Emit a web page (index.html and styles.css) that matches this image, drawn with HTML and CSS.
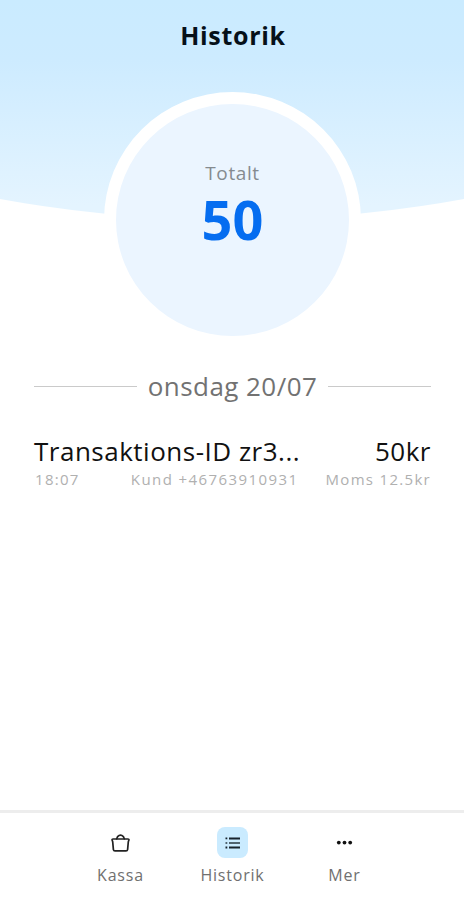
FILE: index.html
```html
<!DOCTYPE html>
<html lang="sv">
<head>
  <meta charset="UTF-8">
  <title>Historik</title>
  <link rel="stylesheet" href="styles.css">
</head>
<body>
  <header class="hero">
    <h1>Historik</h1>
    <div class="total">
      <span class="total-label">Totalt</span>
      <span class="total-value">50</span>
    </div>
  </header>
  <main class="history">
    <h2 class="date">onsdag 20/07</h2>
    <div class="transaction">
      <div class="row main-row">
        <span class="name">Transaktions-ID zr3...</span>
        <span class="amount">50kr</span>
      </div>
      <div class="row meta">
        <span class="time">18:07</span>
        <span class="customer">Kund +46763910931</span>
        <span class="vat">Moms 12.5kr</span>
      </div>
    </div>
  </main>
  <nav class="tabs">
    <a class="tab">
      <span class="icon">
        <svg width="22" height="22" viewBox="0 0 22 22" fill="none" stroke="#222" stroke-width="1.7" stroke-linejoin="round" stroke-linecap="round">
          <path d="M2 7.8Q2 7 3 7H18Q19 7 19 7.8L18.3 9.8L17.6 17.6Q17.4 18.9 16 18.9H5Q3.6 18.9 3.4 17.6L2.7 9.8Z"/>
          <path d="M6.7 6.8L7.6 4.6Q10.5 1.6 13.4 4.6L14.3 6.8"/>
        </svg>
      </span>
      <span>Kassa</span>
    </a>
    <a class="tab active">
      <span class="icon">
        <svg width="16" height="14" viewBox="0 0 16 14" fill="#17232c">
          <path d="M0.5 1.5h1.8v1.8H0.5zM4 1.4h11v2H4zM0.5 10.6h1.8v1.8H0.5zM4 10.5h11v2H4z"/>
          <path fill="#4f6470" d="M0.5 6.1h1.8v1.8H0.5zM4 6h11v2H4z"/>
        </svg>
      </span>
      <span>Historik</span>
    </a>
    <a class="tab">
      <span class="icon">
        <svg width="18" height="6" viewBox="0 0 18 6" fill="#111">
          <circle cx="2.8" cy="2.6" r="1.9"/>
          <circle cx="8.5" cy="2.6" r="1.9"/>
          <circle cx="14.2" cy="2.6" r="1.9"/>
        </svg>
      </span>
      <span>Mer</span>
    </a>
  </nav>
</body>
</html>
```
FILE: styles.css
```css
* { box-sizing: border-box; }
html, body { height: 100%; margin: 0; }
body { display: flex; flex-direction: column; background: #fff; font-family: 'Open Sans', sans-serif; overflow: hidden; }
h1, h2 { margin: 0; }

.hero { position: relative; height: 348px; display: flex; flex-direction: column; align-items: center; }
/* blue backdrop with a slightly curved bottom edge */
.hero::before { content: ''; position: absolute; top: 0; left: 0; right: 0; height: 220px; z-index: -1; background: linear-gradient(#caebff 0, #cdebff 60px, #e4f4ff 205px); clip-path: circle(1291px at 50% -1071px); }
.hero h1 { height: 92px; padding: 18px 0 0 2px; font-size: 25px; line-height: 34px; font-weight: 700; letter-spacing: 0.7px; color: #061019; }
.total { width: 257px; height: 256px; margin-left: 1px; border: 12px solid #fff; border-radius: 50%; background: #ebf5ff; display: flex; flex-direction: column; align-items: center; padding-top: 56px; flex-shrink: 0; }
.total-label { font-size: 19px; line-height: 26px; letter-spacing: 0.6px; color: #858b90; }
.total-value { margin-top: 1px; font-size: 54px; line-height: 64px; font-weight: 700; color: #056df0; }

.history { flex: 1; padding: 20px 33px 0 34px; }
.date { display: flex; align-items: center; gap: 11px; font-size: 26px; line-height: 36px; font-weight: 400; letter-spacing: 0.45px; color: #727272; }
.date::before, .date::after { content: ''; flex: 1; height: 1px; background: #cacaca; }
.transaction { margin-top: 29px; }
.row { display: flex; justify-content: space-between; white-space: nowrap; }
.main-row { font-size: 26px; line-height: 36px; letter-spacing: 0.5px; color: #111; }
.meta { font-size: 15px; line-height: 20px; letter-spacing: 1.3px; color: #b0b0b0; }
.time { padding-left: 1px; }
.customer { margin: 0 27px 0 auto; letter-spacing: 1.42px; }

.tabs { height: 90px; display: flex; justify-content: center; border-top: 3px solid #ededed; padding: 14px 0 0 1px; }
.tab { width: 112px; display: flex; flex-direction: column; align-items: center; gap: 6px; font-size: 16px; line-height: 22px; letter-spacing: 0.8px; color: #707070; }
.icon { width: 31px; height: 31px; border-radius: 8px; display: flex; align-items: center; justify-content: center; }
.active .icon { background: #caebff; }
```
